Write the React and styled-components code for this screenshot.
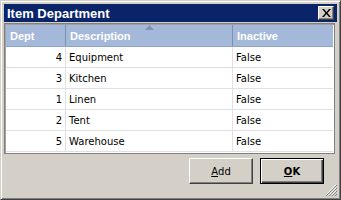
import React from 'react';
import styled, { createGlobalStyle } from 'styled-components';

const GlobalStyle = createGlobalStyle`
  html, body {
    margin: 0;
    padding: 0;
    background: #d4d0c8;
  }
  body {
    font-family: Tahoma, "DejaVu Sans", "Liberation Sans", sans-serif;
  }
`;

const rows = [
  { dept: 4, description: 'Equipment', inactive: 'False' },
  { dept: 3, description: 'Kitchen', inactive: 'False' },
  { dept: 1, description: 'Linen', inactive: 'False' },
  { dept: 2, description: 'Tent', inactive: 'False' },
  { dept: 5, description: 'Warehouse', inactive: 'False' },
];

const App = () => {
  return (
    <>
      <GlobalStyle />
      <Window>
        <TitleBar>
          <Title>Item Department</Title>
          <CloseButton>
            <svg width='9' height='8' viewBox='0 0 9 8'>
              <path d='M0 0h2l2.5 3 2.5-3h2L5.5 4 9 8H7L4.5 5 2 8H0l3.5-4z' fill='#000' />
            </svg>
          </CloseButton>
        </TitleBar>
        <Grid>
          <HeaderRow>
            <HeaderCell>Dept</HeaderCell>
            <HeaderCell>
              Description
              <SortMark>
                <svg width='9' height='5' viewBox='0 0 9 5'>
                  <path d='M0 5L4.5 0 9 5z' fill='#7f93b8' />
                </svg>
              </SortMark>
            </HeaderCell>
            <HeaderCell $last>Inactive</HeaderCell>
          </HeaderRow>
          {rows.map((row) => (
            <Row key={row.dept}>
              <Cell $align='right'>{row.dept}</Cell>
              <Cell>{row.description}</Cell>
              <Cell $last>{row.inactive}</Cell>
            </Row>
          ))}
        </Grid>
        <Footer>
          <Button>
            <u>A</u>dd
          </Button>
          <Button $default>
            <u>O</u>K
          </Button>
        </Footer>
        <Grip>
          <svg width='12' height='12' viewBox='0 0 12 12'>
            <path d='M11 1L1 11M11 4L4 11M11 7L7 11' stroke='#fff' strokeWidth='1' />
            <path d='M12 1L1 12M12 4L4 12M12 7L7 12M12 10L10 12' stroke='#808080' strokeWidth='1' />
          </svg>
        </Grip>
      </Window>
    </>
  );
};

const Window = styled.div`
  position: relative;
  width: 341px;
  height: 200px;
  box-sizing: border-box;
  background: #d4d0c8;
  border-style: solid;
  border-width: 1px;
  border-color: #d4d0c8 #404040 #404040 #d4d0c8;
  box-shadow: inset 1px 1px 0 #ffffff, inset -1px -1px 0 #808080;
  padding: 3px 3px 3px 3px;
  display: flex;
  flex-direction: column;
  overflow: hidden;
`;

const TitleBar = styled.div`
  height: 18px;
  background: #0a246a;
  display: flex;
  align-items: center;
  justify-content: space-between;
  padding: 0 3px 0 3px;
  flex-shrink: 0;
`;

const Title = styled.div`
  color: #ffffff;
  font-weight: bold;
  font-size: 13px;
  font-family: "Liberation Sans", Arial, sans-serif;
`;

const CloseButton = styled.div`
  width: 16px;
  height: 14px;
  box-sizing: border-box;
  background: #d4d0c8;
  border-style: solid;
  border-width: 1px;
  border-color: #ffffff #404040 #404040 #ffffff;
  box-shadow: inset -1px -1px 0 #808080;
  display: flex;
  align-items: center;
  justify-content: center;
`;

const Grid = styled.div`
  margin: 1px 2px 0 0;
  height: 131px;
  box-sizing: border-box;
  background: #ffffff;
  border: 1px solid #808080;
  box-shadow: inset 1px 1px 0 #a0a0a0;
  padding: 1px 1px 0 1px;
  flex-shrink: 0;
`;

const HeaderRow = styled.div`
  display: grid;
  grid-template-columns: 60px 167px 1fr;
  height: 21px;
  background: #a4b9da;
  border-bottom: 1px solid #8ea3c6;
`;

const HeaderCell = styled.div`
  position: relative;
  color: #ffffff;
  font-weight: bold;
  font-size: 11px;
  font-family: "Liberation Sans", Arial, sans-serif;
  display: flex;
  align-items: center;
  padding-left: 4px;
  border-right: ${(p) => (p.$last ? 'none' : '1px solid #7f8fae')};
`;

const SortMark = styled.span`
  position: absolute;
  top: 0;
  left: 0;
  right: 0;
  display: flex;
  justify-content: center;
  line-height: 0;
`;

const Row = styled.div`
  display: grid;
  grid-template-columns: 60px 167px 1fr;
  height: 21px;
  border-bottom: 1px solid #e0dfe3;
  box-sizing: border-box;
`;

const Cell = styled.div`
  font-size: 10px;
  font-family: "DejaVu Sans", Tahoma, sans-serif;
  color: #000000;
  display: flex;
  align-items: center;
  justify-content: ${(p) => (p.$align === 'right' ? 'flex-end' : 'flex-start')};
  padding: 0 3px;
  border-right: ${(p) => (p.$last ? 'none' : '1px solid #e0dfe3')};
`;

const Footer = styled.div`
  display: flex;
  justify-content: flex-end;
  gap: 7px;
  padding: 4px 13px 0 0;
`;

const Button = styled.div`
  width: 64px;
  height: 26px;
  box-sizing: border-box;
  background: #d4d0c8;
  font-size: 10px;
  font-family: "DejaVu Sans", Tahoma, sans-serif;
  font-weight: ${(p) => (p.$default ? 'bold' : 'normal')};
  color: #000000;
  display: flex;
  align-items: center;
  justify-content: center;
  border-style: solid;
  border-width: 1px;
  border-color: ${(p) => (p.$default ? '#000000' : '#ffffff #404040 #404040 #ffffff')};
  box-shadow: ${(p) =>
    p.$default
      ? 'inset 1px 1px 0 #ffffff, inset -1px -1px 0 #404040, inset -2px -2px 0 #808080'
      : 'inset -1px -1px 0 #808080'};
`;

const Grip = styled.div`
  position: absolute;
  right: 3px;
  bottom: 3px;
  width: 12px;
  height: 12px;
  line-height: 0;
`;

export default App;
